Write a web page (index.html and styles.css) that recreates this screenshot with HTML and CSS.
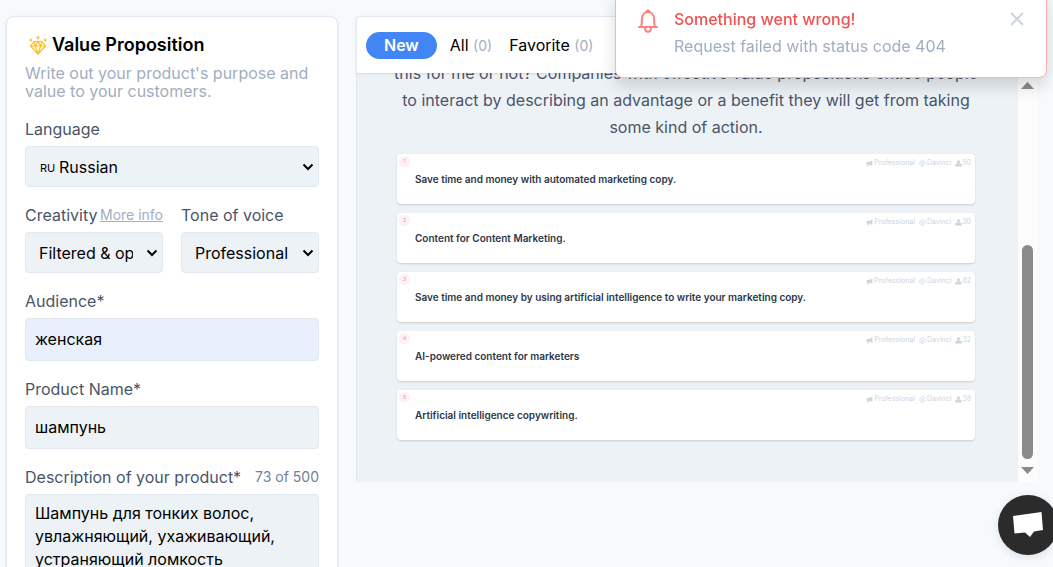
FILE: index.html
```html
<!DOCTYPE html>
<html lang="en">
<head>
    <meta charset="UTF-8">
    <meta name="viewport" content="width=device-width, initial-scale=1.0">
    <title>Value Proposition</title>
    <link rel="stylesheet" href="styles.css">
</head>
<body>
    <svg class="sprite" aria-hidden="true">
        <symbol id="horn" viewBox="0 0 12 12">
            <path d="M1 3.500h4L11 1v9L5 7.500H4.500l.6 3.500H2.800L2.200 7.500H1z" fill="currentColor"/>
        </symbol>
        <symbol id="cube" viewBox="0 0 12 12">
            <path d="M6 1l4.500 2.500v5L6 11 1.500 8.500v-5zM6 6v4M6 6L2.500 4M6 6l3.500-2" fill="none" stroke="currentColor" stroke-width="1.500" stroke-dasharray="3 1"/>
        </symbol>
        <symbol id="person" viewBox="0 0 12 12">
            <path d="M6 .5a2.500 2.500 0 0 1 1.500 4.500v1.500h2.500a1.500 1.500 0 0 1 1.500 1.500v3H.5V8A1.500 1.500 0 0 1 2 6.500h2.500V5A2.500 2.500 0 0 1 6 .5z" fill="currentColor"/>
        </symbol>
    </svg>

    <main class="page">
        <form class="panel" onsubmit="event.preventDefault();">
            <h1 class="title">
                <svg class="gem" viewBox="0 0 20 20" fill="none" stroke="#fbbf24" stroke-width="1.200" stroke-linejoin="round">
                    <path d="M6 6.500h8l3.500 4.500-7.500 8L2.500 11zM2.500 11h15M6 6.500l1.200 4.500L10 19l2.800-8L14 6.500M7.200 11L10 6.500l2.800 4.500"/>
                    <path d="M10 0l.7 1.900 1.500.7-1.500.7L10 5.200l-.7-1.900-1.500-.7 1.500-.7zM2.800 2.800l.6 1.700 1.600.6-1.600.6-.6 1.700-.6-1.700L.6 5.100l1.600-.6zM17.200 2.800l.6 1.700 1.600.6-1.600.6-.6 1.700-.6-1.700-1.600-.6 1.600-.6z" fill="#fbbf24" stroke="none"/>
                </svg>
                Value Proposition
            </h1>
            <p class="intro">Write out your product's purpose and value to your customers.</p>

            <div class="field">
                <label for="language">Language</label>
                <div class="flag-select">
                    <span class="flag">RU</span>
                    <select id="language">
                        <option>Russian</option>
                    </select>
                </div>
            </div>

            <div class="row">
                <div class="field">
                    <div class="label-row">
                        <label for="creativity">Creativity</label>
                        <a class="more" href="#">More info</a>
                    </div>
                    <select id="creativity">
                        <option>Filtered &amp; optimized</option>
                    </select>
                </div>
                <div class="field">
                    <label for="tone">Tone of voice</label>
                    <select id="tone">
                        <option>Professional</option>
                    </select>
                </div>
            </div>

            <div class="field">
                <label for="audience">Audience*</label>
                <input class="filled" type="text" id="audience" value="женская">
            </div>

            <div class="field">
                <label for="product">Product Name*</label>
                <input type="text" id="product" value="шампунь">
            </div>

            <div class="field">
                <div class="label-row">
                    <label for="description">Description of your product*</label>
                    <span class="counter">73 of 500</span>
                </div>
                <textarea id="description" rows="5">Шампунь для тонких волос, увлажняющий, ухаживающий, устраняющий ломкость</textarea>
            </div>
        </form>

        <section class="results">
            <nav class="tabs">
                <button class="tab active" type="button">New</button>
                <button class="tab" type="button">All <span class="count">(0)</span></button>
                <button class="tab" type="button">Favorite <span class="count">(0)</span></button>
            </nav>
            <div class="viewport">
                <div class="feed">
                    <p class="about">
                        this for me or not? Companies with effective value propositions entice people<br>
                        to interact by describing an advantage or a benefit they will get from taking<br>
                        some kind of action.
                    </p>
                    <div class="cards">
                        <article class="card">
                            <span class="number">1</span>
                            <p class="copy">Save time and money with automated marketing copy.</p>
                            <div class="meta">
                                <span><svg><use href="#horn"/></svg> Professional</span>
                                <span><svg><use href="#cube"/></svg> Davinci</span>
                                <span class="score"><svg><use href="#person"/></svg>50</span>
                            </div>
                        </article>
                        <article class="card">
                            <span class="number">2</span>
                            <p class="copy">Content for Content Marketing.</p>
                            <div class="meta">
                                <span><svg><use href="#horn"/></svg> Professional</span>
                                <span><svg><use href="#cube"/></svg> Davinci</span>
                                <span class="score"><svg><use href="#person"/></svg>30</span>
                            </div>
                        </article>
                        <article class="card">
                            <span class="number">3</span>
                            <p class="copy">Save time and money by using artificial intelligence to write your marketing copy.</p>
                            <div class="meta">
                                <span><svg><use href="#horn"/></svg> Professional</span>
                                <span><svg><use href="#cube"/></svg> Davinci</span>
                                <span class="score"><svg><use href="#person"/></svg>82</span>
                            </div>
                        </article>
                        <article class="card">
                            <span class="number">4</span>
                            <p class="copy">AI-powered content for marketers</p>
                            <div class="meta">
                                <span><svg><use href="#horn"/></svg> Professional</span>
                                <span><svg><use href="#cube"/></svg> Davinci</span>
                                <span class="score"><svg><use href="#person"/></svg>32</span>
                            </div>
                        </article>
                        <article class="card">
                            <span class="number">5</span>
                            <p class="copy">Artificial intelligence copywriting.</p>
                            <div class="meta">
                                <span><svg><use href="#horn"/></svg> Professional</span>
                                <span><svg><use href="#cube"/></svg> Davinci</span>
                                <span class="score"><svg><use href="#person"/></svg>38</span>
                            </div>
                        </article>
                    </div>
                </div>
                <div class="scrollbar" aria-hidden="true">
                    <svg class="arrow" viewBox="0 0 13 7"><path d="M0 7L6.500 0 13 7z"/></svg>
                    <div class="track"><div class="thumb"></div></div>
                    <svg class="arrow" viewBox="0 0 13 7"><path d="M0 0l6.500 7L13 0z"/></svg>
                </div>
            </div>
        </section>
    </main>

    <div class="toast" role="alert">
        <svg class="bell" viewBox="0 0 22 24" fill="none" stroke="#fc8181" stroke-width="2" stroke-linejoin="round" stroke-linecap="round">
            <path d="M2 18h18M4 18c1-2 .8-4 .8-7C4.800 6 7.500 3 11 3s6.200 3 6.200 8c0 3-.2 5 .8 7M9.500 3c0-2 3-2 3 0M8 19c0 5 6 5 6 0"/>
        </svg>
        <div class="message">
            <p class="error">Something went wrong!</p>
            <p class="reason">Request failed with status code 404</p>
        </div>
        <button class="close" type="button" aria-label="Close">
            <svg viewBox="0 0 14 14" fill="none" stroke="#cbd5e0" stroke-width="2"><path d="M1 1l12 12M13 1L1 13"/></svg>
        </button>
    </div>

    <button class="chat" type="button" aria-label="Chat">
        <svg viewBox="0 0 30 26" fill="#fff"><path d="M0 4L28.500 0 30 18l-9 1.500L17 25l-5-4.500L1.500 21.500z"/></svg>
    </button>
</body>
</html>
```
FILE: styles.css
```css
* {
    box-sizing: border-box;
}

body {
    height: 100vh;
    margin: 0;
    overflow: hidden;
    background-color: #f7fafc;
    font-family: Inter, "Liberation Sans", sans-serif;
    font-size: 16px;
    line-height: 24px;
    color: #000;
}

h1,
p {
    margin: 0;
}

button {
    padding: 0;
    border: none;
    background: none;
    font: inherit;
    cursor: pointer;
}

.sprite {
    display: none;
}

.page {
    display: grid;
    grid-template-columns: 332px 1fr;
    align-items: start;
    gap: 18px;
    padding: 16px 16px 0 6px;
}

/* form */
.panel {
    display: flex;
    flex-direction: column;
    gap: 16px;
    padding: 16px 18px;
    border: 1px solid #e2e8f0;
    border-radius: 8px;
    background-color: #fff;
    box-shadow: 0 1px 3px rgba(0, 0, 0, 0.1);
}

.title {
    display: flex;
    align-items: center;
    gap: 4px;
    margin-bottom: -9px;
    padding-left: 3px;
    font-size: 18px;
    font-weight: 600;
}

.gem {
    width: 20px;
    height: 20px;
}

.intro {
    margin-bottom: 1px;
    line-height: 18px;
    color: #a0aec0;
}

.row {
    display: grid;
    grid-template-columns: 1fr 1fr;
    gap: 18px;
}

.field {
    display: flex;
    flex-direction: column;
    gap: 5px;
    min-width: 0;
}

label {
    color: #4a5568;
}

.label-row {
    display: flex;
    justify-content: space-between;
    white-space: nowrap;
}

.more {
    font-size: 14px;
    color: #a0aec0;
}

.counter {
    font-size: 14px;
    color: #718096;
}

select,
input,
textarea {
    display: block;
    width: 100%;
    margin: 0;
    border: 1px solid #e2e8f0;
    border-radius: 4px;
    background-color: #edf2f7;
    font: inherit;
    color: #000;
}

select {
    height: 41px;
    padding: 0 29px 0 13px;
    appearance: none;
    background-image: url("data:image/svg+xml,%3Csvg xmlns='http://www.w3.org/2000/svg' width='12' height='8' fill='none' stroke='black' stroke-width='2'%3E%3Cpath d='M1.500 1.500L6 6l4.500-4.500'/%3E%3C/svg%3E");
    background-repeat: no-repeat;
    background-position: right 4px center;
}

.flag-select {
    position: relative;
}

.flag-select select {
    padding-left: 33px;
}

.flag {
    position: absolute;
    top: 10px;
    left: 15px;
    font-size: 11px;
    pointer-events: none;
}

input {
    height: 43px;
    padding: 0 9px 2px;
}

.filled {
    background-color: #e8f0fe;
}

textarea {
    padding: 7px 9px;
    line-height: 23px;
    resize: none;
}

/* results */
.results {
    display: flex;
    flex-direction: column;
    height: calc(100vh - 101px);
    min-width: 0;
}

.tabs {
    display: flex;
    align-items: center;
    gap: 17px;
    height: 57px;
    flex-shrink: 0;
    padding: 0 9px;
    border: 1px solid #e2e8f0;
    border-bottom: none;
    border-radius: 4px 4px 0 0;
    background-color: #fff;
    box-shadow: 0 1px 3px rgba(0, 0, 0, 0.1);
    z-index: 1;
}

.active {
    margin-right: -4px;
    padding: 0 18px;
    border-radius: 14px;
    background-color: #4285f4;
    line-height: 27px;
    font-weight: 600;
    color: #fff;
}

.count {
    font-size: 14px;
    color: #a0aec0;
}

.viewport {
    display: flex;
    flex: 1;
    min-height: 0;
    overflow: hidden;
}

.feed {
    display: flex;
    flex: 1;
    flex-direction: column;
    justify-content: flex-end;
    gap: 13px;
    padding: 0 43px 42px 40px;
    border-left: 1px solid #e2e8f0;
    background-color: #edf2f7;
}

.about {
    margin: 0 -12px;
    line-height: 27px;
    text-align: center;
    color: #4a5568;
}

.cards {
    display: flex;
    flex-direction: column;
    gap: 9px;
}

.card {
    display: grid;
    grid-template-columns: 16px 1fr auto;
    height: 50px;
    padding: 2px;
    border-radius: 4px;
    background-color: #fff;
    box-shadow: 0 1px 2px rgba(0, 0, 0, 0.15);
}

.number {
    width: 11px;
    height: 11px;
    border-radius: 50%;
    background-color: #fff0f4;
    font-size: 5px;
    line-height: 11px;
    text-align: center;
    color: #f687a8;
}

.copy {
    align-self: center;
    font-size: 10px;
    font-weight: 600;
    line-height: 16px;
    color: #2d3748;
}

.meta {
    display: flex;
    gap: 4px;
    padding: 1px 2px 0 0;
    font-size: 7px;
    line-height: 12px;
    color: #cbd5e0;
}

.meta span {
    display: flex;
    align-items: center;
    gap: 1px;
    height: 12px;
}

.meta .score {
    gap: 0;
}

.meta svg {
    width: 7px;
    height: 7px;
}

.scrollbar {
    display: flex;
    flex-direction: column;
    align-items: center;
    width: 19px;
    padding: 9px 0 8px;
    background-color: #fcfcfc;
}

.arrow {
    width: 13px;
    height: 7px;
    fill: #8a8a8a;
}

.track {
    display: flex;
    flex: 1;
    align-items: flex-end;
    padding: 8px 0;
}

.thumb {
    width: 11px;
    height: 59%;
    border-radius: 6px;
    background-color: #8a8a8a;
}

/* error toast */
.toast {
    position: fixed;
    top: -10px;
    right: 6px;
    z-index: 2;
    display: flex;
    width: 432px;
    padding: 16px 22px 19px 21px;
    border: 1px solid #feb2b2;
    border-radius: 8px;
    background-color: #fff;
    box-shadow: 0 8px 16px rgba(0, 0, 0, 0.15);
}

.bell {
    width: 22px;
    height: 24px;
    margin-top: 2px;
}

.message {
    display: flex;
    flex: 1;
    flex-direction: column;
    gap: 3px;
    padding-left: 15px;
}

.error {
    font-weight: 500;
    color: #f05252;
}

.reason {
    color: #a0aec0;
}

.close {
    align-self: flex-start;
    height: 24px;
}

.close svg {
    display: block;
    width: 14px;
    height: 14px;
}

/* chat button */
.chat {
    position: fixed;
    right: -5px;
    bottom: 12px;
    display: flex;
    align-items: center;
    justify-content: center;
    width: 60px;
    height: 60px;
    border-radius: 50%;
    background-color: #2b2b2b;
    box-shadow: 0 2px 10px rgba(0, 0, 0, 0.1);
}

.chat svg {
    width: 30px;
    height: 26px;
}
```
